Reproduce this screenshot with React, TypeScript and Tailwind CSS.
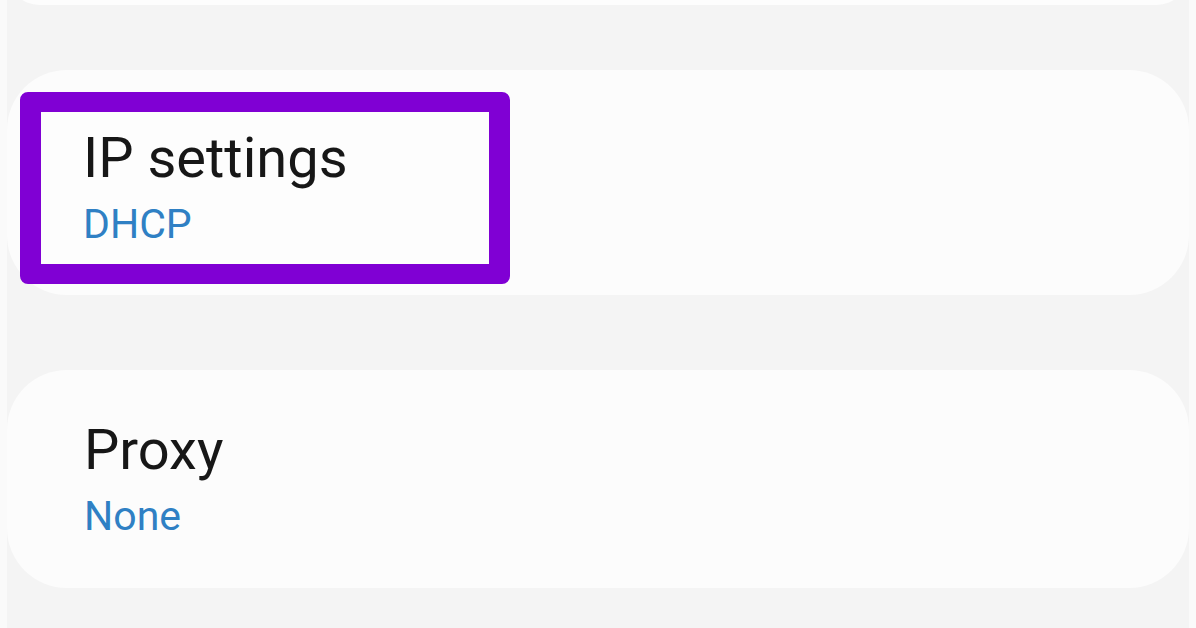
export default function App() {
  return (
    <div className="w-full h-[628px] overflow-hidden bg-[#fafafa] px-[7px] font-['Roboto','Liberation_Sans',sans-serif]">
      <div className="h-full bg-[#f4f4f4] flex flex-col">
        {/* previous card, mostly scrolled off */}
        <div className="-mt-[60px] h-[65px] shrink-0 bg-[#fdfdfd] rounded-[60px]" />

        {/* IP settings card */}
        <div className="mt-[65px] h-[225px] shrink-0 bg-[#fcfcfc] rounded-[60px] pl-[13px] pt-[22px]">
          <div className="w-[490px] h-[192px] rounded-[8px] border-[20px] border-x-[21px] border-[#8000d4] bg-[#fdfdfd] pl-[42px] pt-[13px]">
            <div className="text-[56px] leading-[66px] text-[#171717]">IP settings</div>
            <div className="mt-[9px] text-[41px] leading-[48px] text-[#2f80c4]">DHCP</div>
          </div>
        </div>

        {/* Proxy card */}
        <div className="mt-[75px] h-[218px] shrink-0 bg-[#fcfcfc] rounded-[60px] pl-[77px] pt-[47px]">
          <div className="text-[56px] leading-[66px] text-[#171717]">Proxy</div>
          <div className="mt-[9px] text-[41px] leading-[48px] text-[#2f80c4]">None</div>
        </div>
      </div>
    </div>
  )
}
